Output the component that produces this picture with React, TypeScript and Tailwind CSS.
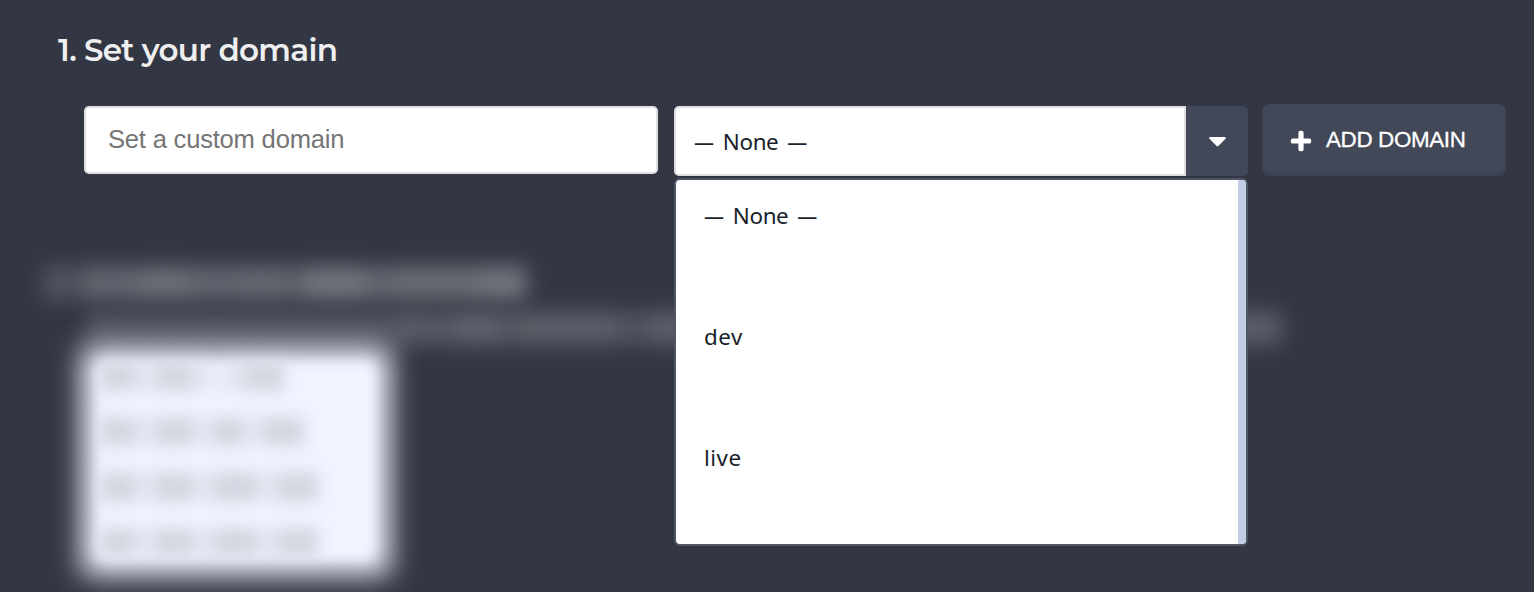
import { FaCaretDown, FaPlus } from "react-icons/fa";

const headingSmudges = [
  "w-[30px] opacity-50",
  "w-[8px] opacity-25",
  "w-[62px] opacity-75",
  "w-[46px] opacity-90",
  "w-[54px] opacity-75",
  "w-[42px] opacity-80",
  "w-[18px] opacity-65",
  "w-[62px] opacity-100",
  "w-[24px] opacity-75",
  "w-[90px] opacity-85",
  "w-[48px] opacity-100",
];

const captionSmudges = [
  "w-[300px] opacity-70",
  "w-[6px] opacity-50",
  "w-[38px] opacity-85",
  "w-[24px] opacity-75",
  "w-[46px] opacity-100",
  "w-[16px] opacity-75",
  "w-[104px] opacity-90",
  "w-[28px] opacity-65",
  "w-[634px] opacity-90",
];

const addressRows = [
  ["w-[36px]", "w-[40px]", "w-[12px] opacity-30", "w-[42px]"],
  ["w-[36px]", "w-[40px]", "w-[32px]", "w-[42px]"],
  ["w-[36px]", "w-[40px]", "w-[46px]", "w-[42px]"],
  ["w-[36px]", "w-[40px]", "w-[46px]", "w-[42px]"],
];

const options = ["— None —", "dev", "live"];

function OptionLabel({ text }: { text: string }) {
  const dashed = text.includes("—");
  return (
    <span className={dashed ? "tracking-[-0.35px] [word-spacing:3.3px]" : "tracking-[0.5px]"}>
      {text.split("—").map((part, i) => (
        <span key={i} className="whitespace-pre">
          {i > 0 && <span className="align-[1px] text-[20px] leading-none font-medium tracking-normal">—</span>}
          {part}
        </span>
      ))}
    </span>
  );
}

function ObscuredDetails() {
  return (
    <section aria-hidden="true" className="w-full pt-[90px]">
      <div className="ml-[43px] flex h-[34px] items-center blur-[10px]">
        {headingSmudges.map((cls, i) => (
          <span key={i} className={`h-full bg-[#71747d] ${cls}`} />
        ))}
      </div>
      <div className="mt-[11px] ml-[86px] flex h-[34px] items-center blur-[10px]">
        {captionSmudges.map((cls, i) => (
          <span key={i} className={`h-full bg-[#5f616c] ${cls}`} />
        ))}
      </div>
      <div className="mt-[2px] ml-[82px] grid h-[228px] w-[308px]">
        <div className="col-start-1 row-start-1 bg-[#f0f4ff] blur-[14px]" />
        <div className="z-[1] col-start-1 row-start-1 m-[18px] bg-[#f0f4ff] blur-[6px]" />
        <div className="z-[2] col-start-1 row-start-1 flex flex-col gap-[26px] pt-[14px] pl-[18px] blur-[8px]">
          {addressRows.map((row, i) => (
            <div key={i} className="flex h-[29.5px] shrink-0 items-center gap-[5px]">
              {row.map((cls, j) => (
                <span key={j} className="flex h-full items-center gap-[5px]">
                  {j > 0 && <span className="h-full w-[8px] bg-[#d8dce7]" />}
                  <span className={`h-full bg-[#d2d6e0] ${cls}`} />
                </span>
              ))}
            </div>
          ))}
        </div>
      </div>
    </section>
  );
}

function DomainSelect() {
  return (
    <div className="relative ml-4 flex h-[70px] w-[574px] font-['Noto_Sans',sans-serif] text-[22.4px] text-[#1a1f2b]">
      <button className="flex w-[512px] items-center rounded-l-[5px] border-2 border-[#dfdfdf] bg-white pt-0.5 pl-[18px] text-left">
        <OptionLabel text={options[0]} />
      </button>
      <button aria-label="Toggle options" className="flex flex-1 items-center justify-center rounded-r-[5px] bg-[#434858] text-white">
        <FaCaretDown className="mb-0.5 size-[29px]" />
      </button>
      <ul className="absolute top-[72px] left-0 z-10 h-[368px] w-[574px] overflow-hidden rounded-[6px] border-2 border-[#505668] bg-white">
        {options.map((option) => (
          <li key={option} className="flex h-[121px] items-start border-r-8 border-[#c3cee6] pt-[21px] pl-7 leading-[30px] last:h-[122px]">
            <OptionLabel text={option} />
          </li>
        ))}
      </ul>
    </div>
  );
}

export default function App() {
  return (
    <main className="h-[592px] w-full overflow-hidden bg-[#333743]">
      <h1 className="ml-[58px] pt-[30px] font-[Montserrat,Inter,sans-serif] text-[31px] leading-10 font-semibold tracking-[-0.68px] whitespace-nowrap text-[#efefef]">
        1. Set your domain
      </h1>
      <div className="mt-[34px] ml-[84px] flex items-start">
        <input
          placeholder="Set a custom domain"
          className="mt-0.5 h-[68px] w-[574px] rounded-[5px] border-2 border-[#dfdfdf] bg-white px-[22px] pb-0.5 font-['Liberation_Sans',sans-serif] text-[25.6px] tracking-[-0.22px] placeholder:text-[#757575]"
        />
        <div className="pt-0.5">
          <DomainSelect />
        </div>
        <button className="ml-3.5 flex h-[72px] w-[244px] items-center rounded-[7px] bg-[#434858] pl-7 font-['Liberation_Sans',sans-serif] text-[22.4px] tracking-[-0.35px] whitespace-nowrap text-white shadow-[inset_0_-3px_4px_#3b4051] [-webkit-text-stroke:0.3px_white]">
          <FaPlus className="mt-0.5 mr-3.5 size-[22px] stroke-white stroke-[24px]" />
          ADD DOMAIN
        </button>
      </div>
      <ObscuredDetails />
    </main>
  );
}
